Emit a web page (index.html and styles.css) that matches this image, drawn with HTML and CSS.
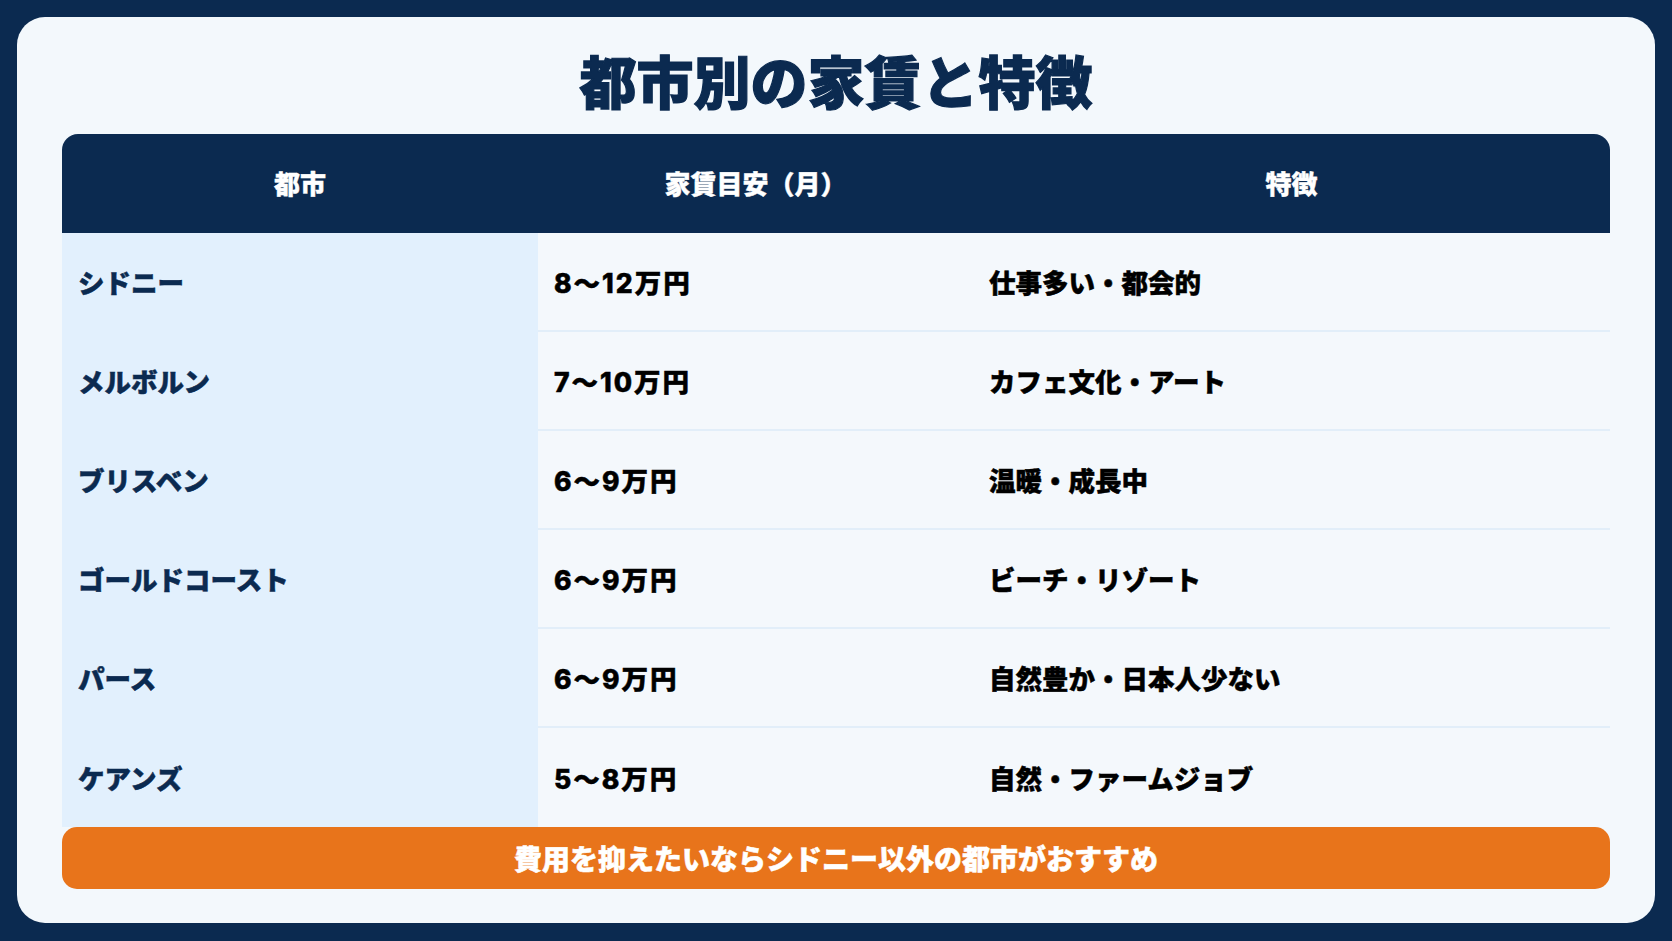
FILE: index.html
```html
<!DOCTYPE html>
<html lang="ja">
<head>
<meta charset="utf-8">
<title>都市別の家賃と特徴</title>
<link rel="stylesheet" href="styles.css">
</head>
<body>
<div class="card">
  <h1 class="title">都市別の家賃と特徴</h1>
  <div class="table">
    <div class="head">
      <div class="th">都市</div>
      <div class="th">家賃目安（月）</div>
      <div class="th">特徴</div>
    </div>
    <div class="row">
      <div class="td city">シドニー</div>
      <div class="td num">8〜12万円</div>
      <div class="td">仕事多い・都会的</div>
    </div>
    <div class="row">
      <div class="td city">メルボルン</div>
      <div class="td num">7〜10万円</div>
      <div class="td">カフェ文化・アート</div>
    </div>
    <div class="row">
      <div class="td city">ブリスベン</div>
      <div class="td num">6〜9万円</div>
      <div class="td">温暖・成長中</div>
    </div>
    <div class="row">
      <div class="td city">ゴールドコースト</div>
      <div class="td num">6〜9万円</div>
      <div class="td">ビーチ・リゾート</div>
    </div>
    <div class="row">
      <div class="td city">パース</div>
      <div class="td num">6〜9万円</div>
      <div class="td">自然豊か・日本人少ない</div>
    </div>
    <div class="row last">
      <div class="td city">ケアンズ</div>
      <div class="td num">5〜8万円</div>
      <div class="td">自然・ファームジョブ</div>
    </div>
  </div>
  <div class="note">費用を抑えたいならシドニー以外の都市がおすすめ</div>
</div>
</body>
</html>
```

FILE: styles.css
```css
* { box-sizing: border-box; }
html, body { margin: 0; padding: 0; }
body {
  width: 1672px;
  height: 941px;
  background: #0b2a50;
  font-family: "Noto Sans CJK JP", "Noto Sans", sans-serif;
  padding: 17px 18px 18px 17px;
}
.card {
  width: 1638px;
  height: 906px;
  background: #f3f8fc;
  border-radius: 28px;
  padding: 22px 45px 34px 45px;
  display: flex;
  flex-direction: column;
}
.title {
  margin: 0 0 15px 0;
  height: 80px;
  line-height: 80px;
  text-align: center;
  font-size: 57px;
  font-weight: 900;
  color: #0b2a50;
  -webkit-text-stroke: 1.2px #0b2a50;
}
.table {
  display: flex;
  flex-direction: column;
}
.head, .row {
  display: grid;
  grid-template-columns: 476px 435px 1fr;
}
.head {
  height: 99px;
  background: #0b2a50;
  border-radius: 16px 16px 0 0;
}
.th {
  display: flex;
  align-items: center;
  justify-content: center;
  padding-bottom: 3px;
  color: #ffffff;
  font-size: 26px;
  font-weight: 900;
  -webkit-text-stroke: 0.4px #ffffff;
}
.row { height: 99px; }
.td {
  display: flex;
  align-items: center;
  padding-left: 16px;
  font-size: 26.5px;
  font-weight: 900;
  color: #000000;
  background: #f4f8fc;
  border-bottom: 2px solid #e2eef9;
  -webkit-text-stroke: 0.5px #000000;
}
.td.num {
  font-family: "Inter", "Noto Sans CJK JP", sans-serif;
  font-weight: 800;
  font-size: 26.5px;
  letter-spacing: 2px;
}
.td.city {
  background: #e2f0fd;
  color: #0b2a50;
  border-bottom-color: #e2f0fd;
  -webkit-text-stroke: 0.5px #0b2a50;
}
.row.last .td { border-bottom: none; }
.note {
  height: 62px;
  background: #e8741b;
  border-radius: 15px;
  color: #ffffff;
  font-size: 28px;
  font-weight: 900;
  display: flex;
  align-items: center;
  justify-content: center;
  -webkit-text-stroke: 0.5px #ffffff;
}
```
